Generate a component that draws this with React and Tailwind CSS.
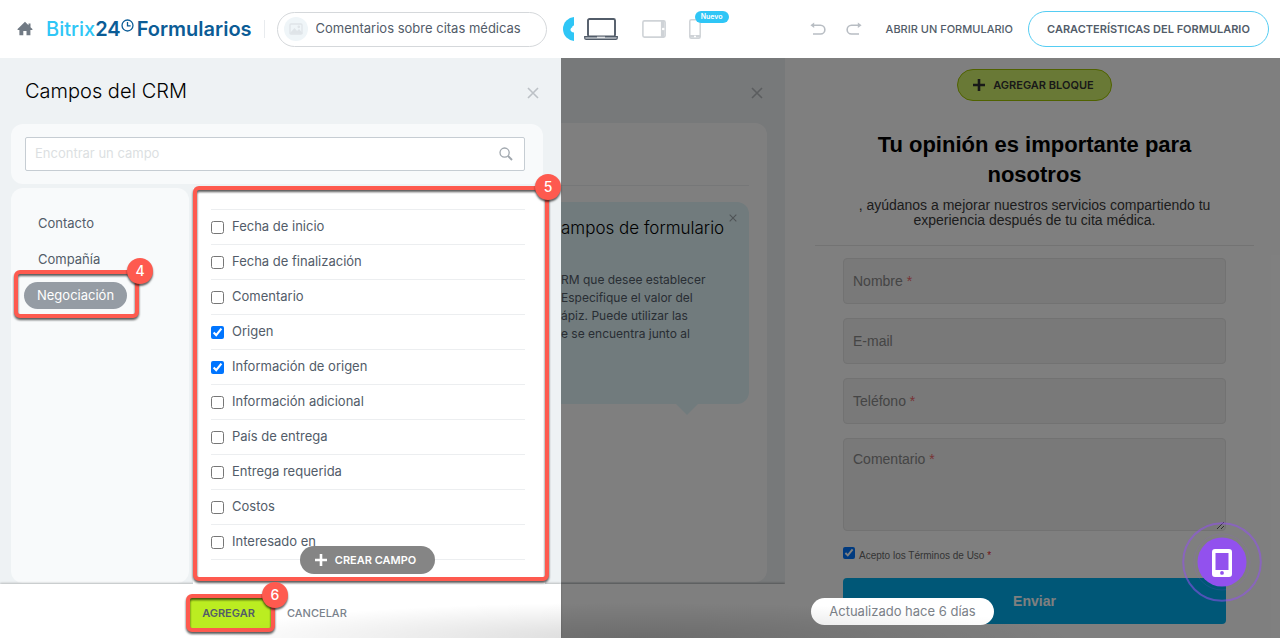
import React from "react";

const fields = [
  ["Fecha de inicio", false],
  ["Fecha de finalización", false],
  ["Comentario", false],
  ["Origen", true],
  ["Información de origen", true],
  ["Información adicional", false],
  ["País de entrega", false],
  ["Entrega requerida", false],
  ["Costos", false],
  ["Interesado en", false],
];

function Cross({ className }) {
  return (
    <svg viewBox="0 0 12 12" className={className} fill="none" stroke="currentColor" strokeWidth="1.6" aria-hidden="true">
      <path d="M1 1l10 10M11 1L1 11" />
    </svg>
  );
}

function Plus() {
  return (
    <svg viewBox="0 0 12 12" className="size-3" fill="none" stroke="currentColor" strokeWidth="2.6" aria-hidden="true">
      <path d="M6 0v12M0 6h12" />
    </svg>
  );
}

function Step({ n, className }) {
  return (
    <span
      className={`absolute z-20 flex size-[26px] items-center justify-center rounded-full bg-[#fe5a4f] text-sm font-medium text-white shadow-[0_2px_2px_rgba(0,0,0,0.6)] ${className}`}
    >
      {n}
    </span>
  );
}

function Frame({ className }) {
  return (
    <div
      className={`pointer-events-none absolute z-10 rounded-md border-4 border-[#fe5a4f] drop-shadow-[0_2px_1px_rgba(0,0,0,0.65)] ${className}`}
    />
  );
}

function Header() {
  return (
    <header className="flex h-[58px] shrink-0 items-center bg-white pr-[11px] pl-[17px]">
      <a href="#inicio" aria-label="Inicio" className="text-[#717a84]">
        <svg viewBox="0 0 16 16" className="size-4" fill="currentColor">
          <path d="M8 .8L.6 8v1h1.8v5.2h3.9v-4.3h3.2v4.3h3.900V9h2V8l-1.900-1.800V2.400h-2v1.800z" />
        </svg>
      </a>
      <a href="#formularios" className="ml-[13px] flex text-xl leading-7 font-semibold text-[#0b5c96]">
        <span className="font-medium text-[#2fc6f6]">Bitrix</span>
        <span>24</span>
        <svg viewBox="0 0 14 14" className="mt-1 mr-[3px] size-[13px]" fill="none" stroke="currentColor" strokeWidth="1.4" aria-hidden="true">
          <circle cx="7" cy="7" r="5.9" />
          <path d="M7 3.200V7.400h3.400" />
        </svg>
        <span>Formularios</span>
      </a>
      <div className="ml-3 h-[18px] w-px bg-[#e8ebee]" />
      <button className="ml-3 flex h-[35px] w-[270px] items-center gap-2 rounded-full border border-[#d5d8db] pl-1.5 text-[13px] text-[#525c69]">
        <span className="flex size-6 items-center justify-center rounded-full bg-[#eff5f8]">
          <svg viewBox="0 0 14 12" className="h-3 w-3.5" fill="none" stroke="#dfe4e8" strokeWidth="1.3" aria-hidden="true">
            <rect x="1" y="1" width="12" height="10" rx="1" />
            <path d="M2 10l3.500-4 2.500 3 2-2 2.500 3z" fill="#dfe4e8" />
            <circle cx="9.800" cy="3.800" r=".7" />
          </svg>
        </span>
        <span className="truncate">Comentarios sobre citas médicas</span>
      </button>
      <svg viewBox="0 0 11 24" className="ml-4 h-6 w-[11px]" aria-hidden="true">
        <circle cx="12" cy="12" r="12" fill="#2fc6f6" />
        <path d="M11 8.600c-1.300.2-1.800 1-1.800 2-1.200.4-1.700 1.200-1.700 2.200 0 1.600 1.200 2.500 3.500 2.600z" fill="#fff" />
      </svg>
      <button aria-label="Escritorio" className="ml-2.5">
        <svg viewBox="0 0 34 22" className="h-[22px] w-[34px]" fill="none" stroke="#525c69">
          <rect x="4" y="1" width="27" height="17.500" rx="1.500" strokeWidth="1.900" />
          <path d="M.7 18.600h32.600v1.400q0 1.300-1.500 1.300H2.200Q.7 21.300.7 20z" fill="#b9bec5" strokeWidth="1.200" />
          <path d="M13 19.200h8" stroke="#fff" />
        </svg>
      </button>
      <button aria-label="Tableta" className="ml-6">
        <svg viewBox="0 0 24 18" className="h-[18px] w-6" fill="none" stroke="#cfd3d7">
          <rect x=".9" y=".9" width="22.200" height="16.200" rx="1.500" strokeWidth="1.600" />
          <path d="M20.600 1v16" strokeWidth="3.400" />
          <circle cx="21.200" cy="9" r="1.300" fill="#fff" stroke="none" />
        </svg>
      </button>
      <button aria-label="Móvil, nuevo" className="relative ml-[23px]">
        <svg viewBox="0 0 12 20" className="h-5 w-3" fill="none" stroke="#cfd3d7">
          <rect x=".8" y=".8" width="10.400" height="18.400" rx="1.500" strokeWidth="1.500" />
          <path d="M1 17.300h10" strokeWidth="2.600" />
          <path d="M5 17.400h2" stroke="#fff" strokeWidth="1.500" />
        </svg>
        <span className="absolute -top-2 left-1.5 flex h-3 w-[34px] items-center justify-center rounded-full bg-[#2fc6f6] text-[7px] font-semibold text-white">
          Nuevo
        </span>
      </button>
      <div className="ml-auto flex items-center">
        <button aria-label="Deshacer" className="text-[#b8bdc3]">
          <svg viewBox="0 0 16 14" className="h-3.5 w-4" fill="none" stroke="currentColor" strokeWidth="1.600">
            <path d="M3 3.300h7.500a4.300 4.300 0 0 1 0 8.700H3" />
            <path d="M.4 3.300L4.200.5v5.600z" fill="currentColor" stroke="none" />
          </svg>
        </button>
        <button aria-label="Rehacer" className="ml-5 text-[#b8bdc3]">
          <svg viewBox="0 0 16 14" className="h-3.5 w-4" fill="none" stroke="currentColor" strokeWidth="1.600">
            <path d="M13 3.300H5.500a4.300 4.300 0 0 0 0 8.700H13" />
            <path d="M15.600 3.300L11.800.5v5.600z" fill="currentColor" stroke="none" />
          </svg>
        </button>
        <button className="ml-6 text-[11px] font-medium whitespace-nowrap text-[#525c69]">ABRIR UN FORMULARIO</button>
        <button className="ml-[15px] h-9 w-[241px] rounded-full border border-[#55cdf3] text-[11px] font-semibold whitespace-nowrap text-[#525c69]">
          CARACTERÍSTICAS DEL FORMULARIO
        </button>
      </div>
    </header>
  );
}

function FieldPicker() {
  return (
    <section className="relative z-10 flex w-[561px] shrink-0 flex-col bg-[#eef2f4]">
      <div className="flex h-[66px] items-center justify-between pr-[22px] pl-[25px]">
        <h1 className="text-xl font-light text-black">Campos del CRM</h1>
        <button aria-label="Cerrar" className="mt-1 text-[#bcc1c6]">
          <Cross className="size-3" />
        </button>
      </div>
      <div className="mr-[18px] ml-[11px] rounded-xl bg-[#f8fafb] py-[13px] pr-[18px] pl-[14px]">
        <label className="flex h-[34px] items-center rounded-xs border border-[#c6cdd3] bg-white pr-[11px] pl-[9px]">
          <input
            type="search"
            aria-label="Encontrar un campo"
            placeholder="Encontrar un campo"
            className="min-w-0 flex-1 text-[13px] outline-none placeholder:text-[#dcdfe2]"
          />
          <svg viewBox="0 0 14 14" className="size-3.5" fill="none" stroke="#a0a7ae" strokeWidth="1.300" aria-hidden="true">
            <circle cx="5.600" cy="5.600" r="4.600" />
            <path d="M9 9l4 4" strokeWidth="1.900" />
          </svg>
        </label>
      </div>
      <div className="mt-1 flex min-h-0 flex-1 pr-4 pl-[11px]">
        <nav className="mb-px w-[178px] rounded-xl bg-[#f8fafb] pt-[22px] pl-[13px] text-[13px] text-[#525c69]">
          <ul className="flex flex-col items-start gap-[9px]">
            <li>
              <a href="#contacto" className="flex h-[27px] items-center rounded-full px-[14px]">Contacto</a>
            </li>
            <li>
              <a href="#compania" className="flex h-[27px] items-center rounded-full px-[14px]">Compañía</a>
            </li>
            <li className="relative">
              <a href="#negociacion" className="flex h-[27px] items-center rounded-full bg-[#959ca4] px-[13px] text-white">
                Negociación
              </a>
              <Frame className="-top-3 -right-3 -bottom-[9px] -left-2.5" />
              <Step n="4" className="-top-6 -right-[26px]" />
            </li>
          </ul>
        </nav>
        <div className="relative ml-1 flex-1 bg-white pt-[21px] pr-5 pl-[18px]">
          <Frame className="-top-0.5 -right-1 bottom-[3px] left-0" />
          <Step n="5" className="-top-[14px] -right-4" />
          <ul className="border-t border-[#eceef0] text-[13px] text-[#525c69]">
            {fields.map(([name, on]) => (
              <li key={name} className="border-b border-[#eceef0]">
                <label className="flex h-[34px] items-center gap-2">
                  <input type="checkbox" defaultChecked={on} className="size-[13px]" />
                  {name}
                </label>
              </li>
            ))}
          </ul>
          <button className="absolute bottom-2.5 left-[107px] flex h-7 w-[135px] items-center justify-center gap-2 rounded-full bg-[#858585] pr-1 text-[11px] font-semibold text-white">
            <Plus />
            CREAR CAMPO
          </button>
        </div>
      </div>
      <footer className="flex h-[54px] shrink-0 items-center bg-white pt-1 pl-[189px] shadow-[0_-1px_2px_rgba(0,0,0,0.22)]">
        <div className="relative">
          <button className="h-8 w-[83px] bg-[#bbed21] pr-1 text-[11px] font-semibold text-[#535c69]">AGREGAR</button>
          <Frame className="-inset-[3px]" />
          <Step n="6" className="-top-[15px] -right-4" />
        </div>
        <button className="ml-[15px] text-[11px] font-medium text-[#7a828c]">CANCELAR</button>
      </footer>
    </section>
  );
}

function MappingPanel() {
  return (
    <section className="flex w-56 shrink-0 flex-col overflow-hidden bg-[#eef2f4]">
      <div className="flex h-[65px] items-center justify-end pr-[22px]">
        <button aria-label="Cerrar panel" className="mt-1 text-[#b6babe]">
          <Cross className="size-3" />
        </button>
      </div>
      <div className="mr-[18px] mb-0.5 flex-1 rounded-r-xl bg-white pt-[62px] pr-[18px]">
        <div className="border-t border-[#eceef0]" />
        <div className="relative mt-4 h-[202px] rounded-r-xl bg-[#e2f6fb] pt-3">
          <h2 className="text-[17px] leading-7 font-light whitespace-nowrap text-black">ampos de formulario</h2>
          <button aria-label="Cerrar ayuda" className="absolute top-3 right-3 text-[#9da7ab]">
            <Cross className="size-2" />
          </button>
          <p className="mt-[29px] text-xs leading-[18px] whitespace-nowrap text-[#525c69]">
            RM que desee establecer
            <br />
            Especifique el valor del
            <br />
            ápiz. Puede utilizar las
            <br />e se encuentra junto al
          </p>
          <svg viewBox="0 0 24 12" className="absolute -bottom-[11px] left-[114px] h-3 w-6" fill="#e2f6fb" aria-hidden="true">
            <path d="M0 0h24L12 12z" />
          </svg>
        </div>
      </div>
      <div className="h-[54px] shrink-0 bg-white shadow-[0_-1px_2px_rgba(0,0,0,0.3)]" />
    </section>
  );
}

function TextField({ id, label, required }) {
  return (
    <div className="flex h-[46px] items-center gap-2 rounded-sm border border-[#e4e4e4] bg-[#f2f2f2] px-[9px]">
      <label htmlFor={id} className="text-sm text-[#8a8a8a]">
        {label} {required && <span className="text-[#f0686c]">*</span>}
      </label>
      <input id={id} type="text" className="min-w-0 flex-1 outline-none" />
    </div>
  );
}

function Preview() {
  return (
    <section className="flex min-w-0 flex-1 flex-col bg-white pt-[11px] pr-[26px] pl-[30px] font-['Liberation_Sans',sans-serif]">
      <button className="flex h-8 w-[155px] items-center justify-center gap-2 self-center rounded-full border border-[#a0c400] bg-[#d2f26c] pr-0.5 font-['Inter',sans-serif] text-[11px] font-semibold text-[#333]">
        <Plus />
        AGREGAR BLOQUE
      </button>
      <h2 className="mx-auto mt-[29px] max-w-[360px] text-center text-[22px] leading-[30px] font-bold text-black">
        Tu opinión es importante para nosotros
      </h2>
      <p className="mx-auto mt-2 max-w-[360px] text-center text-sm leading-[15px] text-[#3a3a3a]">
        , ayúdanos a mejorar nuestros servicios compartiendo tu experiencia después de tu cita médica.
      </p>
      <div className="mt-[17px] border-t border-[#e6e6e6]" />
      <form className="mt-3 flex flex-col px-7" onSubmit={(e) => e.preventDefault()}>
        <div className="flex flex-col gap-[14px]">
          <TextField id="nombre" label="Nombre" required />
          <TextField id="email" label="E-mail" />
          <TextField id="telefono" label="Teléfono" required />
          <div className="flex h-[93px] flex-col rounded-sm border border-[#e4e4e4] bg-[#f2f2f2]">
            <label htmlFor="comentario" className="px-[9px] pt-2.5 text-sm text-[#8a8a8a]">
              Comentario <span className="text-[#f0686c]">*</span>
            </label>
            <textarea id="comentario" className="min-h-0 flex-1 resize-y px-[9px] outline-none" />
          </div>
        </div>
        <label className="mt-4 flex h-4 items-center gap-1 text-[10px] text-[#6a6a6a]">
          <input type="checkbox" defaultChecked className="mb-1 size-3" />
          <span>
            Acepto los Términos de Uso <span className="text-[#e8262d]">*</span>
          </span>
        </label>
        <button className="mt-[15px] h-[46px] rounded-sm bg-[#00afef] text-sm font-bold text-white">Enviar</button>
      </form>
    </section>
  );
}

export default function App() {
  return (
    <div className="relative flex h-screen flex-col overflow-hidden bg-white font-['Inter',sans-serif]">
      <Header />
      <main className="relative flex min-h-0 flex-1">
        <FieldPicker />
        <MappingPanel />
        <Preview />
        <div className="pointer-events-none absolute inset-0 bg-black/50" />
        <p className="absolute bottom-[13px] left-[811px] flex h-[27px] w-[183px] items-center justify-center rounded-full bg-white text-[13px] text-[#7b8188]">
          Actualizado hace 6 días
        </p>
        <button aria-label="Vista móvil" className="absolute right-[18px] bottom-9 z-20">
          <svg viewBox="0 0 80 80" className="size-20" fill="none">
            <circle cx="40" cy="40" r="38.800" stroke="#9251ee" strokeOpacity=".55" strokeWidth="2" />
            <circle cx="40" cy="40" r="28" stroke="#9251ee" strokeOpacity=".15" />
            <circle cx="40" cy="40" r="24.500" fill="#9251ee" />
            <path
              fillRule="evenodd"
              fill="#fff"
              d="M33 27h14a3 3 0 0 1 3 3v22a3 3 0 0 1-3 3H33a3 3 0 0 1-3-3V30a3 3 0 0 1 3-3zm.5 4v17h13V31zM40 49a1.900 1.900 0 1 0 0 3.800 1.900 1.900 0 0 0 0-3.800z"
            />
          </svg>
        </button>
      </main>
      <div className="pointer-events-none absolute inset-x-[200px] bottom-0 z-30 h-9 bg-[radial-gradient(ellipse_at_bottom,rgba(0,0,0,0.15),transparent_70%)]" />
    </div>
  );
}
